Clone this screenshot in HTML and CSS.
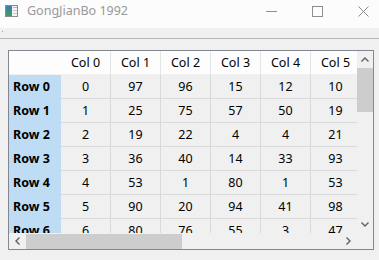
FILE: index.html
```html
<!DOCTYPE html>
<html lang="en">
<head>
    <meta charset="UTF-8">
    <title>GongJianBo 1992</title>
    <link rel="stylesheet" href="styles.css">
</head>
<body>
<div class="window">

    <!-- Title bar -->
    <div class="titlebar">
        <svg class="app-icon" width="13" height="12" viewBox="0 0 13 12">
            <defs>
                <linearGradient id="ig" x1="0" y1="0" x2="0" y2="1">
                    <stop offset="0" stop-color="#3d7bb0"/>
                    <stop offset="1" stop-color="#3f9e5a"/>
                </linearGradient>
            </defs>
            <rect x="0.5" y="0.5" width="12" height="11" fill="#f4f4f4" stroke="#8c8c8c"/>
            <rect x="1" y="1" width="6" height="10" fill="url(#ig)"/>
            <rect x="8" y="2" width="4" height="1" fill="#b5b5b5"/>
            <rect x="8" y="5" width="4" height="1" fill="#c8c8c8"/>
            <rect x="8" y="8" width="4" height="1" fill="#c8c8c8"/>
        </svg>
        <span class="title">GongJianBo 1992</span>
        <div class="caption-buttons">
            <div class="caption-btn">
                <svg width="11" height="11" viewBox="0 0 11 11"><line x1="0" y1="5.5" x2="11" y2="5.5" stroke="#8e8e8e"/></svg>
            </div>
            <div class="caption-btn">
                <svg width="11" height="11" viewBox="0 0 11 11"><rect x="0.5" y="0.5" width="10" height="10" fill="none" stroke="#8e8e8e"/></svg>
            </div>
            <div class="caption-btn">
                <svg width="11" height="11" viewBox="0 0 11 11"><path d="M0.5 0.5 L10.5 10.5 M10.5 0.5 L0.5 10.5" stroke="#8e8e8e"/></svg>
            </div>
        </div>
    </div>

    <!-- Tool bar strip -->
    <div class="toolbar"><span class="grip"></span></div>

    <!-- Table view -->
    <div class="content">
        <div class="frame">
            <div class="viewport">
                <table class="grid">
                    <tr class="head">
                        <th class="corner-cell"></th>
                        <th>Col 0</th><th>Col 1</th><th>Col 2</th><th>Col 3</th><th>Col 4</th><th>Col 5</th>
                    </tr>
                    <tr><th class="row-head">Row 0</th><td>0</td><td>97</td><td>96</td><td>15</td><td>12</td><td>10</td></tr>
                    <tr><th class="row-head">Row 1</th><td>1</td><td>25</td><td>75</td><td>57</td><td>50</td><td>19</td></tr>
                    <tr><th class="row-head">Row 2</th><td>2</td><td>19</td><td>22</td><td>4</td><td>4</td><td>21</td></tr>
                    <tr><th class="row-head">Row 3</th><td>3</td><td>36</td><td>40</td><td>14</td><td>33</td><td>93</td></tr>
                    <tr><th class="row-head">Row 4</th><td>4</td><td>53</td><td>1</td><td>80</td><td>1</td><td>53</td></tr>
                    <tr><th class="row-head">Row 5</th><td>5</td><td>90</td><td>20</td><td>94</td><td>41</td><td>98</td></tr>
                    <tr><th class="row-head">Row 6</th><td>6</td><td>80</td><td>76</td><td>55</td><td>3</td><td>47</td></tr>
                </table>
            </div>

            <div class="vscroll">
                <div class="arrow">
                    <svg width="8" height="5" viewBox="0 0 8 5"><polyline points="0.5,4.5 4,1 7.5,4.5" fill="none" stroke="#606060" stroke-width="1.4"/></svg>
                </div>
                <div class="track"><div class="thumb"></div></div>
                <div class="arrow">
                    <svg width="8" height="5" viewBox="0 0 8 5"><polyline points="0.5,0.5 4,4 7.5,0.5" fill="none" stroke="#606060" stroke-width="1.4"/></svg>
                </div>
            </div>

            <div class="hscroll">
                <div class="arrow">
                    <svg width="5" height="8" viewBox="0 0 5 8"><polyline points="4.5,0.5 1,4 4.5,7.5" fill="none" stroke="#606060" stroke-width="1.4"/></svg>
                </div>
                <div class="track"><div class="thumb"></div></div>
                <div class="arrow">
                    <svg width="5" height="8" viewBox="0 0 5 8"><polyline points="0.5,0.5 4,4 0.5,7.5" fill="none" stroke="#606060" stroke-width="1.4"/></svg>
                </div>
            </div>

            <div class="scroll-corner"></div>
        </div>
    </div>

</div>
</body>
</html>
```

FILE: styles.css
```css
/* General */
html, body {
    margin: 0;
    padding: 0;
    overflow: hidden;
}
body {
    width: 379px;
    height: 260px;
    background-color: #f0f0f0;
    font-family: "Noto Sans", "Open Sans", sans-serif;
    font-size: 12.5px;
    color: #000;
}
.window {
    width: 386px;
}

/* Title bar */
.titlebar {
    height: 28px;
    background-color: #fcfcfc;
    display: flex;
    align-items: flex-start;
}
.app-icon {
    margin: 5px 0 0 5px;
    flex: none;
}
.title {
    margin: 3px 0 0 9px;
    line-height: 16px;
    color: #999;
}
.caption-buttons {
    margin-left: auto;
    display: flex;
}
.caption-btn {
    width: 46px;
    height: 28px;
    display: flex;
    justify-content: center;
    padding-top: 6px;
    box-sizing: border-box;
}

/* Tool bar strip */
.toolbar {
    height: 10px;
    border-bottom: 1px solid #b9b9b9;
    position: relative;
}
.grip {
    position: absolute;
    left: 2px;
    top: 3px;
    width: 1px;
    height: 1px;
    background-color: #a0a0a0;
}

/* Table view */
.content {
    padding: 11px 0 0 8px;
}
.frame {
    width: 364px;
    height: 198px;
    border: 1px solid #828790;
    display: grid;
    grid-template-columns: 348px 16px;
    grid-template-rows: 182px 16px;
}
.viewport {
    overflow: hidden;
    background-color: #f0f0f0;
}
.grid {
    border-collapse: separate;
    border-spacing: 0;
    table-layout: fixed;
}
.grid th,
.grid td {
    padding: 0;
    height: 23px;
    width: 49px;
    min-width: 49px;
    text-align: center;
    font-weight: normal;
    white-space: nowrap;
    border-right: 1px solid #d9d9d9;
    border-bottom: 1px solid #d9d9d9;
    overflow: hidden;
}
.grid .head th {
    background-color: #fdfdfd;
    border-right-color: #e5e5e5;
    border-bottom-color: #f0f0f0;
}
.grid .head .corner-cell {
    width: 51px;
    min-width: 51px;
    border-right-color: #fdfdfd;
}
.grid .row-head {
    width: 51px;
    min-width: 51px;
    text-align: left;
    padding-left: 4px;
    box-sizing: border-box;
    font-weight: bold;
    background-color: #bedcf4;
    border-right-color: #bedcf4;
    border-bottom-color: #bedcf4;
}

/* Scroll bars */
.vscroll {
    display: flex;
    flex-direction: column;
    background-color: #f0f0f0;
}
.vscroll .arrow {
    height: 17px;
    display: flex;
    justify-content: center;
    align-items: center;
    flex: none;
}
.vscroll .track {
    flex: 1;
}
.vscroll .thumb {
    height: 44px;
    background-color: #cdcdcd;
}
.hscroll {
    display: flex;
    background-color: #f0f0f0;
}
.hscroll .arrow {
    width: 17px;
    display: flex;
    justify-content: center;
    align-items: center;
    flex: none;
}
.hscroll .track {
    flex: 1;
    padding-top: 1px;
}
.hscroll .thumb {
    width: 156px;
    height: 15px;
    background-color: #cdcdcd;
}
.scroll-corner {
    background-color: #f0f0f0;
}
```
